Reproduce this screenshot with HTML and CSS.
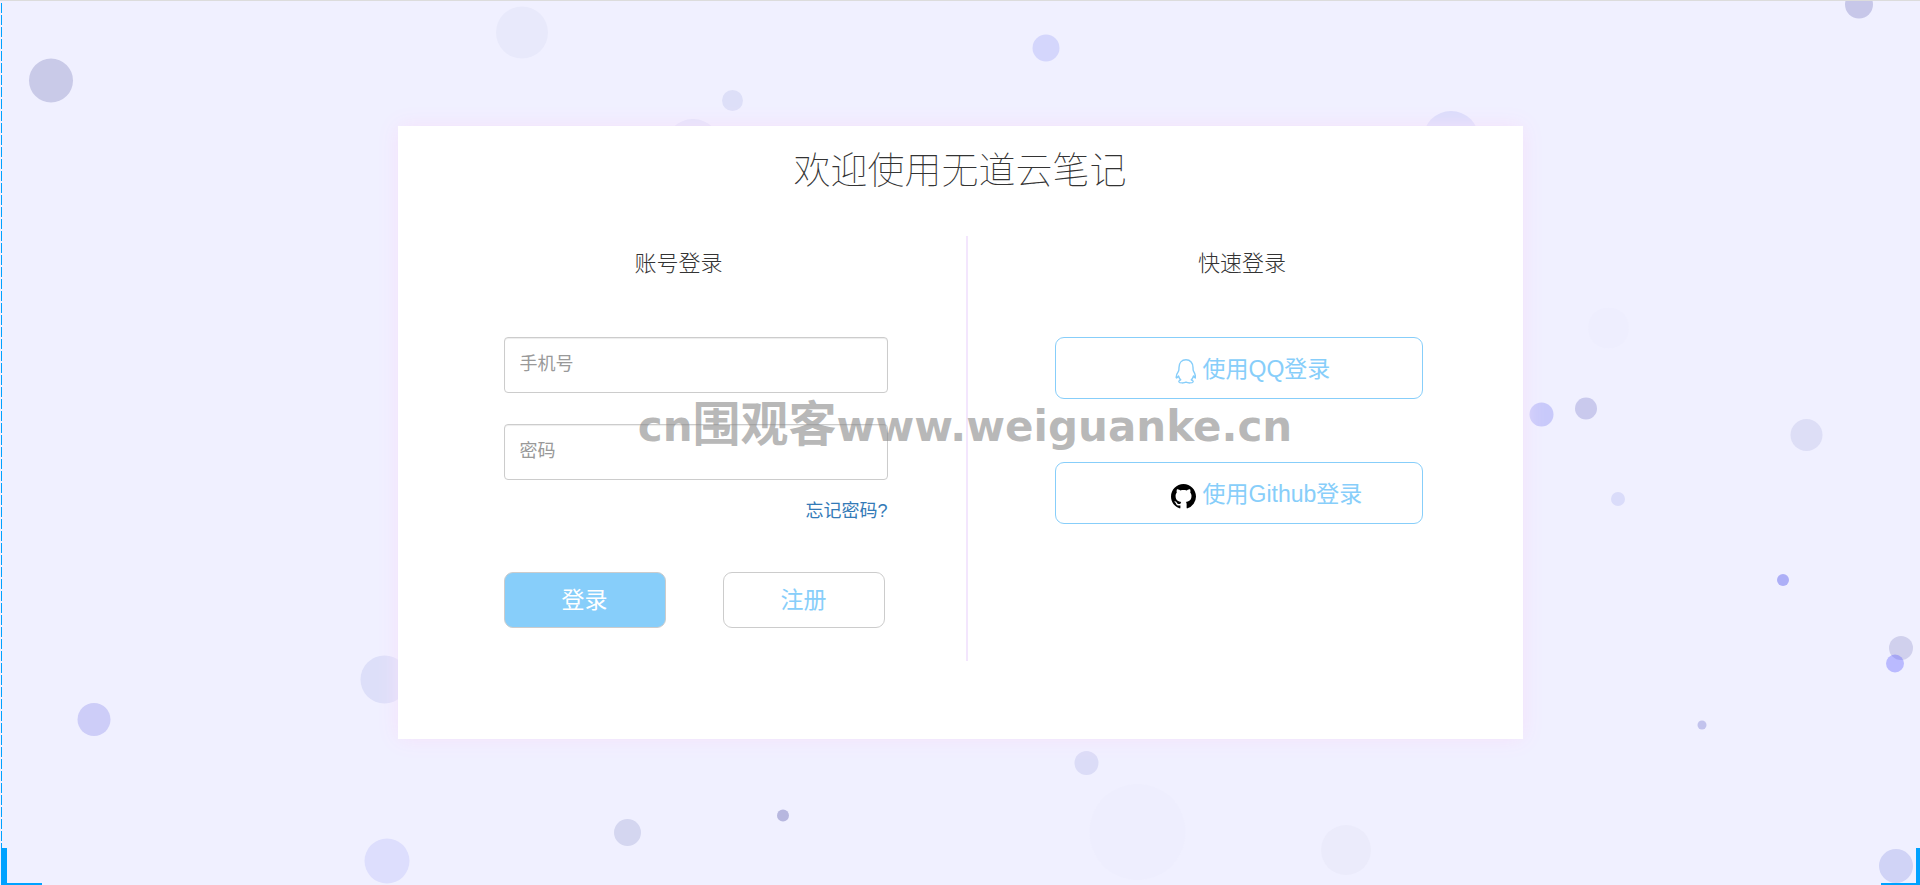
FILE: index.html
```html
<!DOCTYPE html>
<html lang="zh-CN">
<head>
  <meta charset="UTF-8">
  <meta name="viewport" content="width=device-width, initial-scale=1.0">
  <title>登录</title>
  <link rel="stylesheet" href="styles.css">
</head>
<body>
  <!-- 背景气泡 -->
  <svg class="bubbles" viewBox="0 0 1920 885" preserveAspectRatio="xMidYMin slice" aria-hidden="true">
    <circle cx="51" cy="80.5" r="22" fill="#c9cae8"/>
    <circle cx="522" cy="32.5" r="26" fill="#e8e9fb"/>
    <circle cx="1046" cy="48" r="13.5" fill="#d4d6fc"/>
    <circle cx="732.5" cy="100.5" r="10.5" fill="#dddff8"/>
    <circle cx="693" cy="147" r="28" fill="#e2e2fa"/>
    <circle cx="1859" cy="4.5" r="14" fill="#c7c7e9"/>
    <circle cx="1451" cy="139" r="28" fill="#dadcfb"/>
    <circle cx="1608.5" cy="328" r="20.5" fill="#eeeefe"/>
    <circle cx="1541.5" cy="414.5" r="12" fill="#c8c9fa"/>
    <circle cx="1586" cy="408.5" r="11" fill="#c9c9ed"/>
    <circle cx="1806.5" cy="435" r="16" fill="#dddef6"/>
    <circle cx="1618" cy="499" r="7" fill="#dadcfa"/>
    <circle cx="1783" cy="580" r="6" fill="#adaff7"/>
    <circle cx="1901" cy="648" r="12" fill="#d0d0ed"/>
    <circle cx="1895" cy="663.5" r="9" fill="#5c5cff" fill-opacity=".36"/>
    <circle cx="1702" cy="725" r="4.5" fill="#c2c3ed"/>
    <circle cx="1896" cy="866" r="17" fill="#d0d3f6"/>
    <circle cx="94" cy="719.5" r="16.5" fill="#cdcdf8"/>
    <circle cx="384.5" cy="679.5" r="24" fill="#dddff9"/>
    <circle cx="387" cy="861" r="22.5" fill="#dddefd"/>
    <circle cx="627.5" cy="832.5" r="13.5" fill="#d4d6f0"/>
    <circle cx="1086.5" cy="763" r="12" fill="#dbdcf7"/>
    <circle cx="783" cy="815.5" r="6" fill="#b7b7df"/>
    <circle cx="1137.5" cy="832" r="48" fill="#eeeefe"/>
    <circle cx="1346" cy="850" r="25" fill="#ebebfb"/>
  </svg>

  <!-- 页面边框 -->
  <div class="side-line"></div>
  <div class="corner corner-left"></div>
  <div class="corner corner-right"></div>

  <main class="login-box">
    <h1>欢迎使用无道云笔记</h1>
    <div class="login-row">
      <section class="login-col account">
        <h2>账号登录</h2>
        <form class="account-form">
          <input class="form-input" type="text" name="phone" placeholder="手机号" aria-label="手机号">
          <input class="form-input" type="password" name="password" placeholder="密码" aria-label="密码">
          <a class="forget" href="#">忘记密码?</a>
          <div class="btn-row">
            <button class="btn btn-login" type="submit">登录</button>
            <button class="btn btn-register" type="button">注册</button>
          </div>
        </form>
      </section>
      <section class="login-col quick">
        <h2>快速登录</h2>
        <div class="quick-list">
          <button class="btn btn-quick" type="button">
            <svg class="icon" viewBox="0 0 25 25" fill="none" stroke="#87cefa" stroke-width="1.4" stroke-linejoin="round" aria-hidden="true">
              <path d="M15 .8C10.700 .8 8 4 8 8.500C8 10 8 11 7.500 12.200C6 14.500 5 16.500 5.200 18.700C5.400 19.500 6.300 18.700 7.500 17C8 18.700 8.600 19.800 9.700 20.800C8.200 21.400 7.600 22.200 8 23C8.700 24.200 13 24.200 15 23.200C17 24.200 21.300 24.200 22 23C22.400 22.200 21.800 21.400 20.300 20.800C21.400 19.800 22 18.700 22.500 17C23.700 18.700 24.600 19.500 24.400 18.700C24.600 16.500 24 14.500 22.500 12.200C22 11 22 10 22 8.500C22 4 19.300 .8 15 .8Z"/>
            </svg>
            <span>使用QQ登录</span>
          </button>
          <button class="btn btn-quick" type="button">
            <svg class="icon" viewBox="0 0 16 16" fill="#000" aria-hidden="true">
              <path d="M8 0C3.580 0 0 3.580 0 8c0 3.540 2.290 6.530 5.470 7.590.4.070.55-.17.55-.38 0-.19-.01-.82-.01-1.490-2.010.37-2.530-.49-2.690-.94-.09-.23-.48-.94-.82-1.130-.28-.15-.68-.52-.01-.53.63-.01 1.080.58 1.230.82.72 1.210 1.870.87 2.330.66.070-.52.28-.87.51-1.070-1.780-.2-3.640-.89-3.640-3.950 0-.87.31-1.590.82-2.150-.08-.2-.36-1.020.08-2.120 0 0 .67-.21 2.200.82.64-.18 1.320-.27 2-.27s1.360.09 2 .27c1.530-1.040 2.200-.82 2.200-.82.44 1.100.16 1.920.08 2.120.51.56.82 1.270.82 2.150 0 3.070-1.870 3.750-3.650 3.950.29.25.54.73.54 1.480 0 1.070-.01 1.930-.01 2.200 0 .21.15.46.55.38A8.010 8.010 0 0 0 16 8c0-4.420-3.580-8-8-8z"/>
            </svg>
            <span>使用Github登录</span>
          </button>
        </div>
      </section>
    </div>
  </main>

  <div class="watermark">cn<span>围观客</span>www.weiguanke.cn</div>
</body>
</html>
```
FILE: styles.css
```css
* {
  box-sizing: border-box;
}

body {
  position: relative;
  margin: 0;
  min-height: 100vh;
  padding: 125px 16px 24px;
  border-top: 1px solid #dcdcdc;
  background: #f0f0ff;
  color: #333;
  font-family: "Liberation Sans", "Noto Sans CJK SC", sans-serif;
  font-size: 18px;
  overflow-x: hidden;
}

/* 背景 */
.bubbles {
  position: absolute;
  top: -1px;
  left: 0;
  width: 100%;
  height: 100vh;
  z-index: -1;
}

.side-line {
  position: absolute;
  top: 2px;
  bottom: 0;
  left: 1px;
  width: 1px;
  background: repeating-linear-gradient(#00a2ff 0 10px, transparent 10px 12px);
}

.corner {
  position: absolute;
  bottom: 0;
  height: 37px;
  border-bottom: 2px solid #00a2ff;
}

.corner-left {
  left: 1px;
  width: 41px;
  border-left: 6px solid #00a2ff;
}

.corner-right {
  right: 0;
  width: 39px;
  border-right: 4px solid #00a2ff;
}

/* 登录框 */
.login-box {
  max-width: 1125px;
  margin: 0 auto;
  padding: 12px 0 78px;
  background: #fff;
  box-shadow: 0 0 20px #f5e1fb;
}

h1, h2 {
  margin: 0;
  font-family: "Noto Sans CJK SC", sans-serif;
  text-align: center;
}

h1 {
  margin-bottom: 38px;
  font-size: 37px;
  font-weight: 100;
  line-height: 60px;
}

h2 {
  padding-right: 6px;
  margin-bottom: 61px;
  font-size: 22px;
  font-weight: 300;
  line-height: 30px;
}

.login-row {
  display: flex;
  flex-wrap: wrap;
}

.login-col {
  flex: 2 1 400px;
  padding: 10px 0 33px;
}

.account {
  flex-basis: 415px;
  border-right: 2px solid #f3e6fd;
}

.account-form {
  display: flex;
  flex-direction: column;
  max-width: 384px;
  margin: 0 78px 0 106px;
}

.form-input {
  width: 100%;
  height: 56px;
  margin-bottom: 31px;
  padding: 6px 15px 8px;
  border: 1px solid #ccc;
  border-radius: 4px;
  background: #fff;
  box-shadow: inset 0 1px 1px rgba(0, 0, 0, 0.075);
  color: #555;
  font: inherit;
}

.form-input::placeholder {
  color: #999;
}

.form-input[type="password"] {
  margin-bottom: 18px;
}

.forget {
  align-self: flex-end;
  margin-bottom: 48px;
  color: #337ab7;
  line-height: 26px;
  text-decoration: none;
}

.btn-row {
  display: flex;
  gap: 57px;
}

.btn {
  height: 56px;
  padding: 0 0 4px;
  border: 1px solid #ccc;
  border-radius: 9px;
  background: #fff;
  color: #87cefa;
  font-family: inherit;
  font-size: 23px;
  cursor: pointer;
}

.btn-login,
.btn-register {
  flex: 0 1 162px;
}

.btn-login {
  background: #87cefa;
  color: #fff;
}

.quick-list {
  display: flex;
  flex-direction: column;
  gap: 63px;
  max-width: 368px;
  margin: 0 100px 0 87px;
}

.btn-quick {
  display: flex;
  align-items: center;
  gap: 7px;
  width: 100%;
  height: 62px;
  padding: 0 0 0 115px;
  border-color: #87cefa;
}

.btn-quick span {
  padding-bottom: 2px;
}

.icon {
  width: 25px;
  height: 25px;
  margin-top: 6px;
}

/* 水印 */
.watermark {
  position: absolute;
  top: 387px;
  left: 0;
  width: 100%;
  padding-left: 10px;
  color: rgba(136, 136, 136, 0.6);
  font-family: "DejaVu Sans", "Noto Sans CJK SC", sans-serif;
  font-size: 42px;
  font-weight: 700;
  line-height: 72px;
  text-align: center;
  pointer-events: none;
}

.watermark span {
  font-size: 48px;
}
```
